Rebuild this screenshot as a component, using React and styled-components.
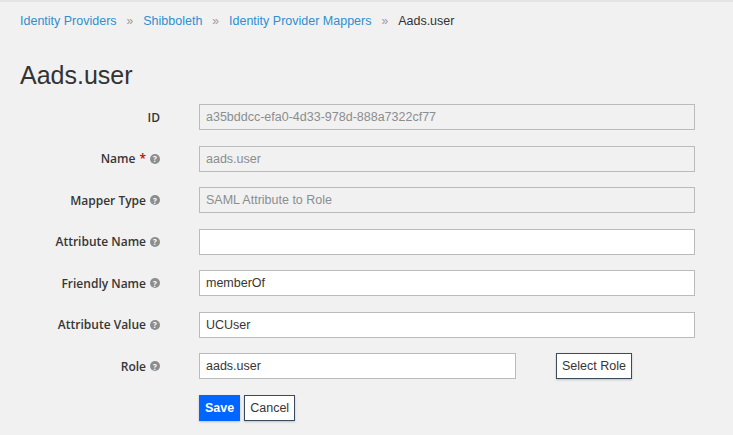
import React from 'react';
import styled, { createGlobalStyle } from 'styled-components';

const Global = createGlobalStyle`
  body { margin: 0; background: #f1f1f1; font-family: "Liberation Sans", Arial, sans-serif; }
`;

const Page = styled.div`
  border-top: 2px solid #e4e4e4;
  padding: 0 20px;
  height: 433px;
  box-sizing: border-box;
`;
const Crumbs = styled.div`
  display: flex;
  align-items: center;
  gap: 10px;
  font-size: 12.5px;
  padding-top: 11px;
  height: 16px;
`;
const Crumb = styled.a`
  color: ${(p) => (p.$current ? '#333' : '#2f8fce')};
`;
const Sep = styled.span`
  color: #999;
  font-size: 12px;
`;
const Title = styled.h1`
  font-size: 25px;
  font-weight: 300;
  color: #333;
  margin: 32px 0 15px;
  line-height: 28px;
`;
const Row = styled.div`
  display: flex;
  align-items: center;
  height: 26px;
  margin-bottom: 15.5px;
`;
const Label = styled.label`
  width: 140px;
  text-align: right;
  font-family: "Open Sans", sans-serif;
  font-size: 12px;
  font-weight: 600;
  color: #363636;
  margin-right: 39px;
  display: flex;
  justify-content: flex-end;
  align-items: center;
  gap: 4px;
`;
const Req = styled.span`color: #c00;`;
const Help = styled.span`
  display: inline-flex;
  width: 10px;
  height: 10px;
  border-radius: 50%;
  background: #8b8d8f;
  color: #fff;
  font-size: 8px;
  justify-content: center;
  align-items: center;
  font-weight: bold;
`;
const Input = styled.div`
  box-sizing: border-box;
  width: ${(p) => p.$w || 496}px;
  height: 26px;
  border: 1px solid #bbb;
  background: ${(p) => (p.$ro ? '#f1f1f1' : '#fff')};
  color: ${(p) => (p.$ro ? '#8b8d8f' : '#363636')};
  font-size: 12.5px;
  padding: 0 6px;
  display: flex;
  align-items: center;
`;
const Btn = styled.button`
  height: 26px;
  font-family: inherit;
  font-size: 12.5px;
  padding: 0 5px;
  margin-left: ${(p) => p.$ml || 0}px;
  border: 1px solid ${(p) => (p.$primary ? '#0066ff' : '#3b4b5e')};
  background: ${(p) => (p.$primary ? '#0066ff' : '#fff')};
  color: ${(p) => (p.$primary ? '#fff' : '#363636')};
  font-weight: ${(p) => (p.$primary ? 'bold' : 'normal')};
  box-shadow: 0 1px 2px rgba(0,0,0,0.2);
`;

const fields = [
  ['ID', 'a35bddcc-efa0-4d33-978d-888a7322cf77', true, false, false],
  ['Name', 'aads.user', true, true, true],
  ['Mapper Type', 'SAML Attribute to Role', true, false, true],
  ['Attribute Name', '', false, false, true],
  ['Friendly Name', 'memberOf', false, false, true],
  ['Attribute Value', 'UCUser', false, false, true],
];

export default function App() {
  return (
    <Page>
      <Global />
      <Crumbs>
        <Crumb>Identity Providers</Crumb><Sep>»</Sep>
        <Crumb>Shibboleth</Crumb><Sep>»</Sep>
        <Crumb>Identity Provider Mappers</Crumb><Sep>»</Sep>
        <Crumb $current>Aads.user</Crumb>
      </Crumbs>
      <Title>Aads.user</Title>
      {fields.map(([l, v, ro, req, help]) => (
        <Row key={l}>
          <Label>{l}{req && <Req>*</Req>}{help && <Help>?</Help>}</Label>
          <Input $ro={ro}>{v}</Input>
        </Row>
      ))}
      <Row>
        <Label>Role<Help>?</Help></Label>
        <Input $w={317}>aads.user</Input>
        <Btn $ml={40}>Select Role</Btn>
      </Row>
      <Row>
        <Label />
        <Btn $primary>Save</Btn>
        <Btn $ml={4}>Cancel</Btn>
      </Row>
    </Page>
  );
}
